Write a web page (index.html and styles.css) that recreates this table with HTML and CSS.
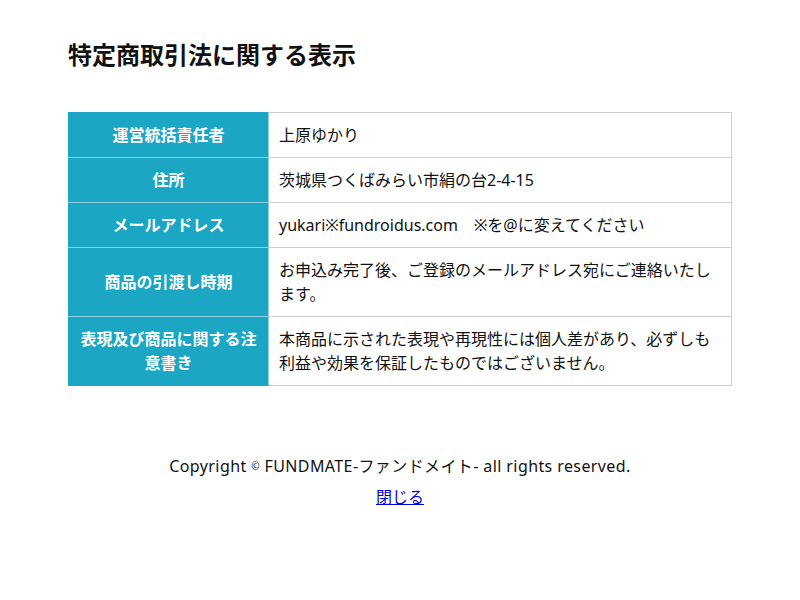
FILE: index.html
```html
<!DOCTYPE html>
<html lang="ja">
<head>
<meta charset="utf-8">
<title>特定商取引法に関する表示</title>
<link rel="stylesheet" href="styles.css">
</head>
<body>
<div class="page">
  <h1 class="title">特定商取引法に関する表示</h1>
  <table class="law">
    <tr><th>運営統括責任者</th><td>上原ゆかり</td></tr>
    <tr><th>住所</th><td>茨城県つくばみらい市絹の台2-4-15</td></tr>
    <tr><th>メールアドレス</th><td>yukari※fundroidus.com　※を@に変えてください</td></tr>
    <tr><th>商品の引渡し時期</th><td>お申込み完了後、ご登録のメールアドレス宛にご連絡いたします。</td></tr>
    <tr><th>表現及び商品に関する注意書き</th><td>本商品に示された表現や再現性には個人差があり、必ずしも利益や効果を保証したものではございません。</td></tr>
  </table>
  <footer class="footer">
    <p class="copy">Copyright <span class="c">©</span> FUNDMATE-ファンドメイト- all rights reserved.</p>
    <p class="close"><a href="#">閉じる</a></p>
  </footer>
</div>
</body>
</html>
```

FILE: styles.css
```css
html, body {
  margin: 0;
  padding: 0;
  background: #fff;
}
body {
  font-family: "Noto Sans", "Noto Sans CJK JP", sans-serif;
  color: #111;
  font-size: 16px;
}
.page {
  width: 664px;
  margin: 0 auto;
  padding-top: 37px;
}
.title {
  margin: 0;
  font-size: 24px;
  line-height: 36px;
  font-weight: bold;
  color: #111;
}
.law {
  margin-top: 39px;
  width: 664px;
  border-collapse: collapse;
  table-layout: fixed;
}
.law th {
  width: 187px;
  background: #1ba6c4;
  color: #fff;
  font-weight: bold;
  font-size: 16px;
  line-height: 24px;
  padding: 10px 6px;
  text-align: center;
  border: 1px solid #8fd2e1;
  border-left-color: #1ba6c4;
}
.law td {
  padding: 10px 10px;
  line-height: 24px;
  font-size: 16px;
  border: 1px solid #cfcfcf;
  color: #111;
  text-align: left;
}
.law tr:first-child th { border-top-color: #1ba6c4; }
.law tr:last-child th { border-bottom-color: #1ba6c4; }
.footer {
  margin-top: 68px;
  text-align: center;
}
.copy {
  margin: 0;
  line-height: 24px;
  font-size: 16px;
  letter-spacing: 0.4px;
}
.copy .c { font-size: 10px; vertical-align: 2px; }
.close {
  margin: 7px 0 0;
  line-height: 24px;
}
.close a {
  color: #0000ee;
}
```
